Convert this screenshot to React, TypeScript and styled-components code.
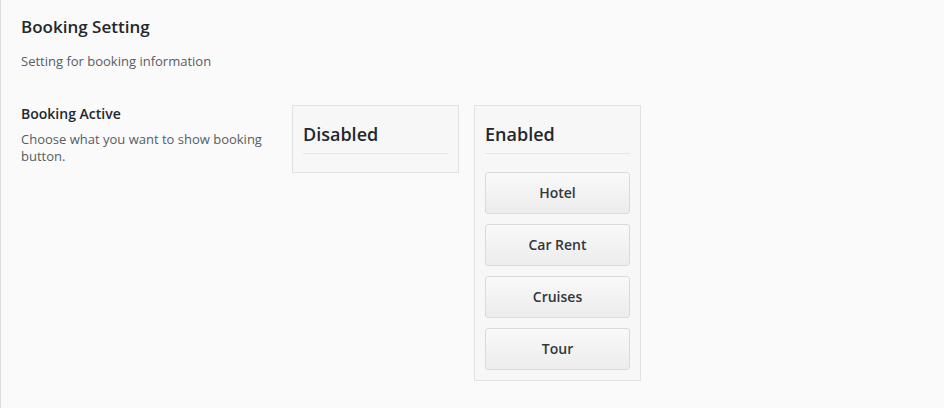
import React from "react";
import styled, { createGlobalStyle } from "styled-components";

const Global = createGlobalStyle`
  html, body { margin: 0; padding: 0; background: #fafafa; }
  body { font-family: "Open Sans", "Noto Sans", sans-serif; color: #23282d; }
`;

const Page = styled.div`
  box-sizing: border-box;
  min-height: 408px;
  border-left: 1px solid #dcdcdc;
  padding: 14px 20px 0 20px;
  background: #fafafa;
`;

const Title = styled.h2`
  margin: 0;
  font-size: 17px;
  line-height: 26px;
  font-weight: 600;
  color: #23282d;
`;

const Subtitle = styled.p`
  margin: 11px 0 0;
  font-size: 13px;
  line-height: 20px;
  color: #555d66;
`;

const Row = styled.div`
  display: flex;
  align-items: flex-start;
  margin-top: 34px;
`;

const Info = styled.div`
  width: 250px;
  margin-right: 21px;
`;

const Label = styled.div`
  margin-top: -1px;
  font-size: 14px;
  font-weight: 600;
  line-height: 20px;
  color: #23282d;
`;

const Desc = styled.div`
  margin-top: 7px;
  font-size: 13px;
  line-height: 17px;
  color: #555d66;
`;

const Columns = styled.div`
  display: flex;
  align-items: flex-start;
  gap: 15px;
`;

const Box = styled.div`
  box-sizing: border-box;
  width: 167px;
  padding: 10px;
  background: #f7f7f7;
  border: 1px solid #e2e2e2;
`;

const BoxHead = styled.h3`
  margin: 0;
  padding: 6px 0 7px;
  font-size: 18px;
  line-height: 24px;
  font-weight: 600;
  color: #23282d;
  border-bottom: 1px solid #e6e6e6;
`;

const List = styled.div`
  display: flex;
  flex-direction: column;
  padding-top: 8px;
`;

const Item = styled.div`
  box-sizing: border-box;
  height: 42px;
  margin-top: 10px;
  padding-bottom: 2px;
  display: flex;
  align-items: center;
  justify-content: center;
  border: 1px solid #dadada;
  border-radius: 3px;
  background: linear-gradient(#f9f9f9, #ececec);
  font-size: 14px;
  font-weight: 600;
  color: #32373c;
`;

const columns: { title: string; items: string[] }[] = [
  { title: "Disabled", items: [] },
  { title: "Enabled", items: ["Hotel", "Car Rent", "Cruises", "Tour"] },
];

export default function App() {
  return (
    <>
      <Global />
      <Page>
        <Title>Booking Setting</Title>
        <Subtitle>Setting for booking information</Subtitle>
        <Row>
          <Info>
            <Label>Booking Active</Label>
            <Desc>Choose what you want to show booking button.</Desc>
          </Info>
          <Columns>
            {columns.map((c) => (
              <Box key={c.title}>
                <BoxHead>{c.title}</BoxHead>
                <List>
                  {c.items.map((i) => (
                    <Item key={i}>{i}</Item>
                  ))}
                </List>
              </Box>
            ))}
          </Columns>
        </Row>
      </Page>
    </>
  );
}
